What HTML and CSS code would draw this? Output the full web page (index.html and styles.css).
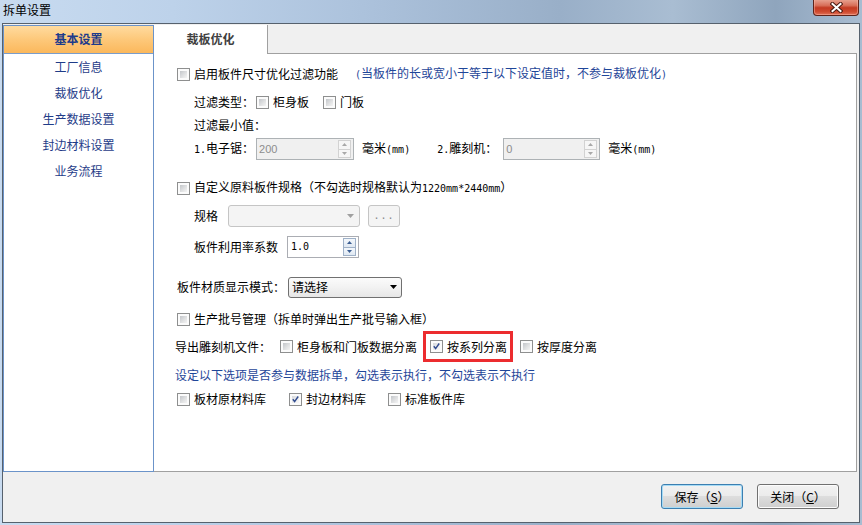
FILE: index.html
```html
<!DOCTYPE html>
<html lang="zh-CN">
<head>
<meta charset="utf-8">
<title>拆单设置</title>
<link rel="stylesheet" href="styles.css">
</head>
<body>
<div class="window">
  <div class="titlebar">
    <span class="title">拆单设置</span>
    <div class="close">
      <svg width="13" height="11" viewBox="0 0 13 11"><path d="M2.5 2 L10.5 9 M10.5 2 L2.5 9" stroke="#4a1a12" stroke-width="4" stroke-linecap="square"/><path d="M2.5 2 L10.5 9 M10.5 2 L2.5 9" stroke="#ffffff" stroke-width="2" stroke-linecap="square"/></svg>
    </div>
  </div>
  <div class="client">
    <div class="main">
      <div class="nav">
        <div class="nav-head">基本设置</div>
        <div class="nav-item">工厂信息</div>
        <div class="nav-item">裁板优化</div>
        <div class="nav-item">生产数据设置</div>
        <div class="nav-item">封边材料设置</div>
        <div class="nav-item">业务流程</div>
      </div>
      <div class="panel">
        <div class="tabs">
          <div class="tab">裁板优化</div>
          <div class="tab-rest"></div>
        </div>
        <div class="content">
          <div class="row r1 ind1">
            <span class="cb"></span><span>启用板件尺寸优化过滤功能</span>
            <span class="note"><span class="hw">(</span>当板件的长或宽小于等于以下设定值时，不参与裁板优化<span class="hw">)</span></span>
          </div>
          <div class="row r2 ind2">
            <span>过滤类型：</span>
            <span class="cb cb-after-label"></span><span>柜身板</span>
            <span class="cb cb-gap"></span><span>门板</span>
          </div>
          <div class="row r3 ind2"><span>过滤最小值：</span></div>
          <div class="row r4 ind2 tall">
            <span><span class="hw">1.</span>电子锯：</span>
            <div class="field disabled f1">
              <span class="val">200</span>
              <span class="spin grey"><span class="sb"><svg width="5" height="3" viewBox="0 0 5 3"><path d="M0 3 L2.5 0 L5 3Z" fill="#a8a8a8"/></svg></span><span class="sb"><svg width="5" height="3" viewBox="0 0 5 3"><path d="M0 0 L2.5 3 L5 0Z" fill="#a8a8a8"/></svg></span></span>
            </div>
            <span class="unit">毫米<span class="hw">(mm)</span></span>
            <span class="lbl2"><span class="hw">2.</span>雕刻机：</span>
            <div class="field disabled f2">
              <span class="val">0</span>
              <span class="spin grey"><span class="sb"><svg width="5" height="3" viewBox="0 0 5 3"><path d="M0 3 L2.5 0 L5 3Z" fill="#a8a8a8"/></svg></span><span class="sb"><svg width="5" height="3" viewBox="0 0 5 3"><path d="M0 0 L2.5 3 L5 0Z" fill="#a8a8a8"/></svg></span></span>
            </div>
            <span class="unit">毫米<span class="hw">(mm)</span></span>
          </div>
          <div class="row r5 ind1">
            <span class="cb"></span><span>自定义原料板件规格（不勾选时规格默认为<span class="hw">1220mm*2440mm</span>）</span>
          </div>
          <div class="row r6 ind2 tall">
            <span>规格</span>
            <div class="combo-dis">
              <svg class="dd" width="7" height="4" viewBox="0 0 7 4"><path d="M0 0 L7 0 L3.5 4Z" fill="#a0a0a0"/></svg>
            </div>
            <div class="ellip"><span class="hw">...</span></div>
          </div>
          <div class="row r7 ind2 tall">
            <span>板件利用率系数</span>
            <div class="field f3">
              <span class="val dark hw">1.0</span>
              <span class="spin blue"><span class="sb"><svg width="5" height="3" viewBox="0 0 5 3"><path d="M0 3 L2.5 0 L5 3Z" fill="#3b5d92"/></svg></span><span class="sb"><svg width="5" height="3" viewBox="0 0 5 3"><path d="M0 0 L2.5 3 L5 0Z" fill="#3b5d92"/></svg></span></span>
            </div>
          </div>
          <div class="row r8 ind1 tall">
            <span>板件材质显示模式：</span>
            <div class="combo">
              <span>请选择</span>
              <svg class="dd" width="7" height="4" viewBox="0 0 7 4"><path d="M0 0 L7 0 L3.5 4Z" fill="#000"/></svg>
            </div>
          </div>
          <div class="row r9 ind1">
            <span class="cb"></span><span>生产批号管理（拆单时弹出生产批号输入框）</span>
          </div>
          <div class="row r10 ind0">
            <span>导出雕刻机文件：</span>
            <span class="cb cb-exp"></span><span>柜身板和门板数据分离</span>
            <span class="mark">
              <span class="cb on"><svg width="11" height="11" viewBox="0 0 11 11"><path d="M2.2 5.2 L4.4 8 L8.8 1.8" fill="none" stroke="#2f4a8e" stroke-width="1.7"/></svg></span><span>按系列分离</span>
            </span>
            <span class="cb cb-thk"></span><span>按厚度分离</span>
          </div>
          <div class="row r11 ind0">
            <span class="note2">设定以下选项是否参与数据拆单，勾选表示执行，不勾选表示不执行</span>
          </div>
          <div class="row r12 ind1">
            <span class="cb"></span><span>板材原材料库</span>
            <span class="cb on cb-g1"><svg width="11" height="11" viewBox="0 0 11 11"><path d="M2.2 5.2 L4.4 8 L8.8 1.8" fill="none" stroke="#2f4a8e" stroke-width="1.7"/></svg></span><span>封边材料库</span>
            <span class="cb cb-g2"></span><span>标准板件库</span>
          </div>
        </div>
      </div>
    </div>
    <div class="footer">
      <button class="btn default">保存（<u>S</u>）</button>
      <button class="btn">关闭（<u>C</u>）</button>
    </div>
  </div>
</div>
</body>
</html>
```
FILE: styles.css
```css
* { box-sizing: border-box; margin: 0; padding: 0; }
html, body { width: 862px; height: 525px; overflow: hidden; }
body {
  font-family: "Noto Sans CJK SC", "Noto Sans", sans-serif;
  font-size: 12px;
  color: #000;
  background: #b7cee8;
}
.hw { font-family: "DejaVu Sans Mono", "Liberation Mono", monospace; font-size: 10px; color: inherit; }

.window {
  width: 862px; height: 525px;
  display: flex; flex-direction: column;
  background: linear-gradient(90deg, #c8dbf0 0%, #bdd2ea 20%, #acc2dc 42%, #99afc8 65%, #a9bdd2 78%, #8fa5bd 90%, #a8bcd1 100%);
}
.titlebar { height: 23px; display: flex; align-items: flex-start; }
.title { padding-left: 3px; line-height: 20px; color: #000; }
.close {
  margin-left: auto; margin-right: 3px; margin-top: -1px;
  width: 46px; height: 17px;
  border: 1px solid #5e231a; border-top: none;
  border-radius: 0 0 4px 4px;
  background: linear-gradient(#e9a796 0%, #d8705a 40%, #c33a22 55%, #cf4b30 80%, #e0735a 100%);
  box-shadow: inset 0 0 0 1px rgba(255, 190, 175, 0.45);
  display: flex; align-items: center; justify-content: center;
}

.client {
  margin: 0 2px; height: 500px;
  border: 1px solid #56616d;
  background: #f0f0f0;
  display: flex; flex-direction: column;
}
.main { display: flex; padding-top: 1px; height: 448px; }

.nav {
  width: 151px; height: 447px;
  border: 1px solid #6b93c9;
  background: #fff;
  display: flex; flex-direction: column;
}
.nav-head {
  height: 28px;
  border-bottom: 1px solid #7a9dcb;
  background: linear-gradient(#ffdb9f 0%, #fdc87a 50%, #fbb85c 100%);
  color: #1d3b8b; font-weight: bold;
  text-align: center; line-height: 26px;
}
.nav-item {
  height: 26px; line-height: 26px;
  text-align: center; color: #1f3c88;
}

.panel { flex: 1; margin-right: 2px; display: flex; flex-direction: column; }
.tabs { height: 29px; display: flex; }
.tab {
  width: 114px; background: #fff;
  border-right: 1px solid #a0a0a0;
  text-align: center; line-height: 28px;
  font-weight: bold; color: #3f3f3f;
}
.tab-rest { flex: 1; background: #f0f0f0; border-bottom: 1px solid #a0a0a0; }
.content {
  flex: 1; background: #fff;
  border-right: 1px solid #a0a0a0;
  border-bottom: 1px solid #a0a0a0;
  padding-top: 10px;
}

.row { display: flex; align-items: center; height: 20px; white-space: nowrap; line-height: 16px; }
.row.tall { height: 22px; }
.ind0 { padding-left: 21px; }
.ind1 { padding-left: 23px; }
.ind2 { padding-left: 40px; }
.r2 { margin-top: 8px; }
.r3 { margin-top: 3px; }
.r4 { margin-top: 3px; }
.r5 { margin-top: 18px; }
.r6 { margin-top: 7px; }
.r7 { margin-top: 9px; }
.r8 { margin-top: 18px; }
.r9 { margin-top: 11px; }
.r10 { margin-top: 2px; height: 31px; }
.r11 { margin-top: 3px; }
.r12 { margin-top: 4px; }

.note { margin-left: 17px; color: #1f4699; }
.note2 { color: #1f4699; }

.cb {
  width: 13px; height: 13px; flex: none;
  border: 1px solid #8e8f8f;
  background: #fbfbfb;
  padding: 1px;
  margin-right: 4px;
  position: relative;
  display: inline-flex; align-items: center; justify-content: center;
}
.cb::before {
  content: ""; position: absolute; left: 2px; top: 2px; right: 2px; bottom: 2px;
  background: linear-gradient(135deg, #c3c6ca 0%, #e2e3e4 60%, #f4f4f4 100%);
}
.cb.on::before { background: linear-gradient(135deg, #d6d8db 0%, #eeeeef 60%, #f8f8f8 100%); }
.cb svg { position: relative; }
.cb-after-label { margin-left: 2px; }
.cb-gap { margin-left: 14px; }
.cb-exp { margin-left: 9px; }
.cb-thk { margin-left: 7px; }
.cb-g1 { margin-left: 23px; }
.cb-g2 { margin-left: 22px; }

.mark {
  margin-left: 6px;
  height: 31px; width: 90px;
  border: 3px solid #ec2c2f;
  display: flex; align-items: center;
  padding-left: 4px;
}

.field {
  height: 22px; display: flex; align-items: center;
  border: 1px solid #abadb3; background: #fff;
}
.field.disabled { background: #f0f0f0; border-color: #adb2b5; }
.f1 { margin-left: 2px; width: 98px; }
.f2 { margin-left: 6px; width: 97px; }
.f3 { margin-left: 9px; width: 72px; }
.val { padding-left: 2px; color: #8d8d8d; font-family: "Liberation Sans", sans-serif; font-size: 11px; }
.val.dark { color: #000; font-family: "DejaVu Sans Mono", monospace; font-size: 10px; padding-left: 3px; }
.spin { margin-left: auto; margin-right: 2px; width: 13px; height: 18px; display: flex; flex-direction: column; gap: 0; }
.sb { flex: 1; display: flex; align-items: center; justify-content: center; border: 1px solid #d2d2d2; background: #f6f6f6; }
.sb + .sb { border-top: none; }
.spin.blue .sb { border-color: #9fb1c8; background: linear-gradient(#f4f8fc, #dfe8f2); }

.unit { margin-left: 8px; }
.lbl2 { margin-left: 27px; }

.combo-dis {
  margin-left: 10px; width: 132px; height: 22px;
  border: 1px solid #c5c5c5; border-radius: 3px;
  background: #f4f4f4;
  display: flex; align-items: center; justify-content: flex-end;
  padding-right: 5px;
}
.ellip {
  margin-left: 8px; width: 32px; height: 22px;
  border: 1px solid #c5c5c5; border-radius: 3px;
  background: #f4f4f4; color: #8a8a8a;
  display: flex; align-items: center; justify-content: center;
  letter-spacing: 1px;
}
.combo {
  margin-left: 3px; width: 114px; height: 21px;
  border: 1px solid #707070; border-radius: 3px;
  background: linear-gradient(#fbfbfb 0%, #f2f2f2 50%, #e6e6e6 100%);
  display: flex; align-items: center;
  padding-left: 3px; padding-right: 4px;
}
.combo .dd { margin-left: auto; }

.footer {
  height: 50px;
  display: flex; justify-content: flex-end; align-items: flex-start;
  padding-top: 12px; padding-right: 20px; gap: 14px;
}
.btn {
  width: 82px; height: 25px;
  border: 1px solid #707070; border-radius: 3px;
  background: linear-gradient(#f2f2f2 0%, #ebebeb 49%, #dddddd 50%, #cfcfcf 100%);
  font-family: "Noto Sans CJK SC", sans-serif; font-size: 12px; color: #000;
  box-shadow: inset 0 0 0 1px #fcfcfc;
}
.btn.default { border-color: #3c7fb1; box-shadow: inset 0 0 0 1px #a6dbf5; }
.btn u { text-decoration: underline; }
```
